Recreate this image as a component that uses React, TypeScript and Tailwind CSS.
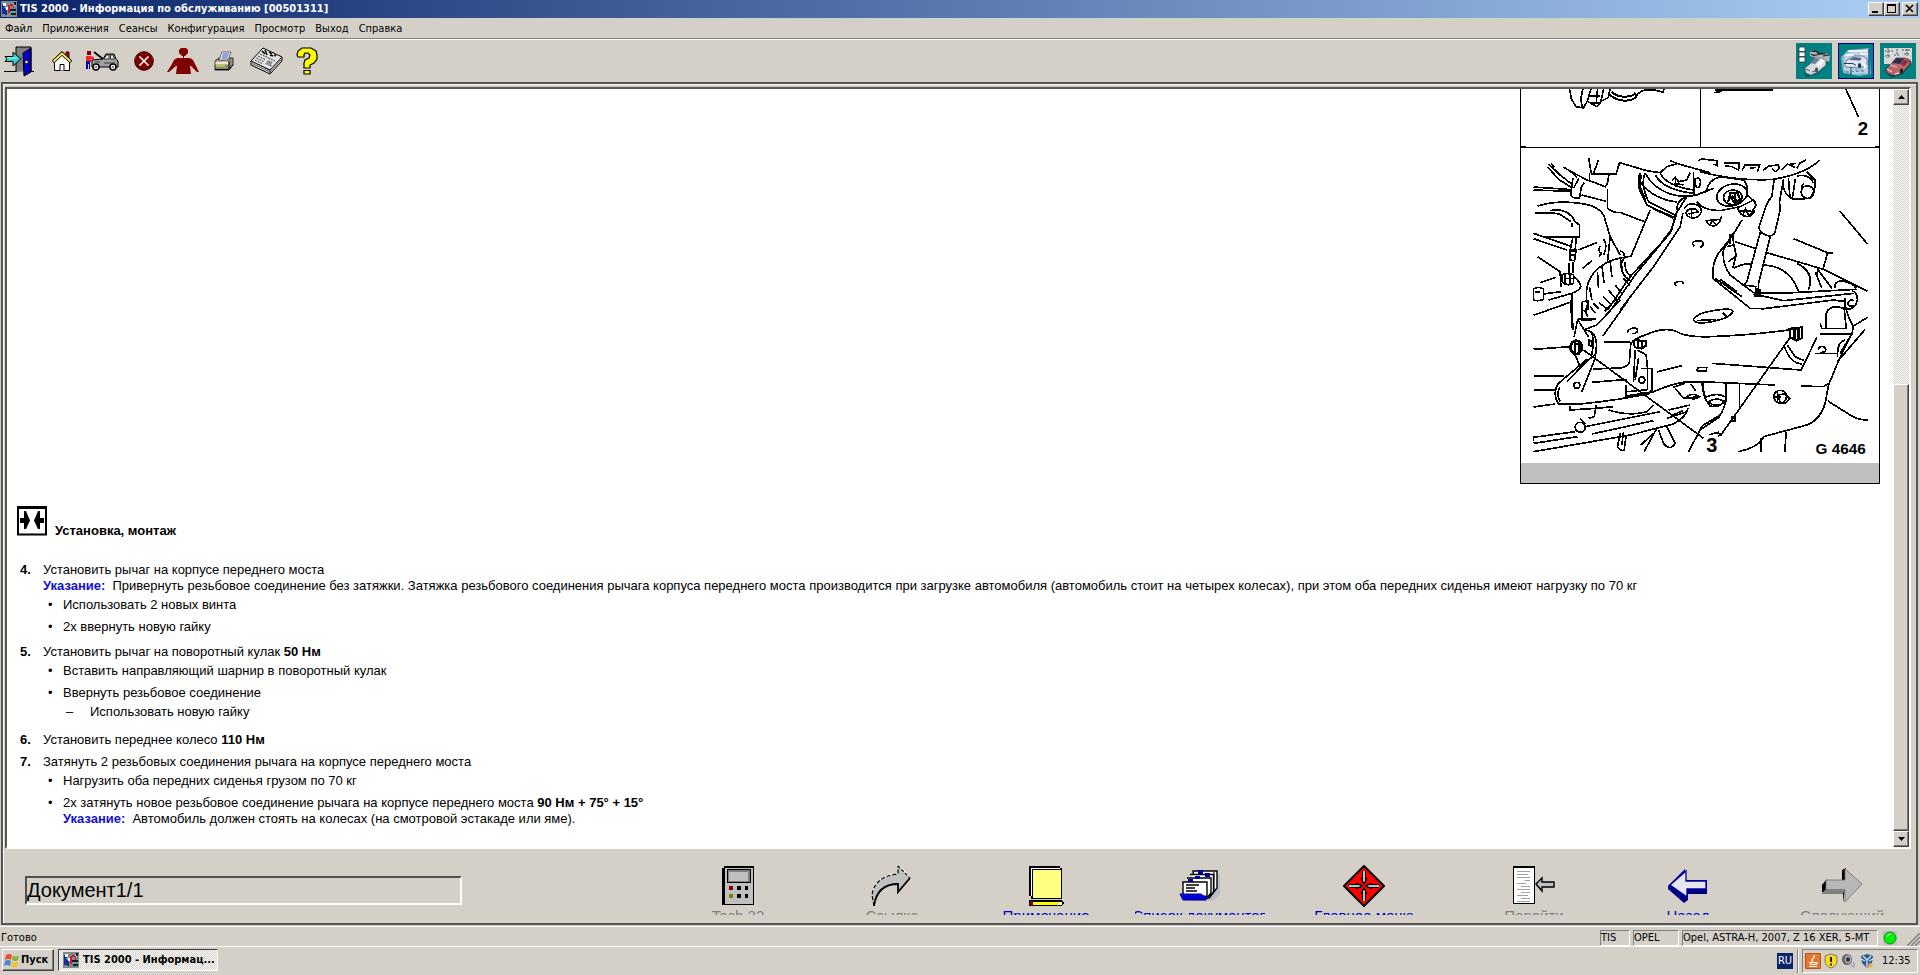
import type { ReactNode } from "react";
import clsx from "clsx";

const raised = "border border-t-white border-l-white border-r-[#404040] border-b-[#404040] shadow-[inset_-1px_-1px_0_#808080] bg-[#d4d0c8]";
const sunken = "border border-t-[#808080] border-l-[#808080] border-r-white border-b-white";

const menuItems = ["Файл", "Приложения", "Сеансы", "Конфигурация", "Просмотр", "Выход", "Справка"];

function AppIcon({ className }: { className?: string }) {
  return (
    <svg viewBox="0 0 16 16" className={className} shapeRendering="crispEdges" aria-hidden>
      <path fill="#7d8c8c" d="M0 0h16v16H0z" />
      <path fill="#1a2a9c" d="M1 3h3v10H1zM4 8h2v6H4z" />
      <path fill="#fff" d="M2 2h3v3H2zM5 6h2v3H5zM11 3h3v2h-3z" />
      <path fill="#d01828" d="M7 4h2v8H7zM9 3h3v2H9zM12 4h1v4h-1z" />
      <path fill="#101820" d="M9 8h6v2H9zM10 12h5v2h-5zM13 1h2v3h-2z" />
      <path fill="#40c0d0" d="M3 6h2v1H3zM10 10h3v1h-3z" />
    </svg>
  );
}

/* ---------- toolbar icons ---------- */

const DoorIcon = () => (
  <svg viewBox="0 0 32 32" className="size-8" aria-hidden>
    <path d="M0 26.500h12M27 26.500h3" stroke="#000" />
    <path d="M12 27V2h15v24" fill="#808080" stroke="#000" />
    <path d="M19 8l8-5v24l-7 4z" fill="#0000c8" stroke="#000" />
    <path d="M25.500 4v23" stroke="#000080" />
    <circle cx="22.500" cy="17" r="1.300" fill="#ff0" />
    <path d="M1 11.500h8V7l8 7-8 7v-4.500H1l2-2.500z" fill="#3cc" stroke="#000" />
    <path d="M3 13h10" stroke="#aff" />
  </svg>
);

const HouseIcon = () => (
  <svg viewBox="0 0 20 20" className="size-5" aria-hidden>
    <path d="M14 1h3v7h-3z" fill="#a01010" stroke="#400" />
    <path d="M2.500 10v9.500h15V10L10 3z" fill="#fff" stroke="#000" />
    <path d="M1 11l9-8.500L19 11" fill="none" stroke="#000" strokeWidth="3.500" />
    <path d="M1.500 10.500L10 2.500l8.500 8" fill="none" stroke="#f8ec60" strokeWidth="2" />
    <path d="M8 19.500v-6h4v6" fill="#fff" stroke="#000" />
  </svg>
);

const MechanicIcon = () => (
  <svg viewBox="0 0 34 20" className="h-5 w-[34px]" aria-hidden>
    <path d="M2 0h4v4H2z" fill="#800000" />
    <path d="M1 5h5l3 1v2H6v3H1z" fill="#f22" />
    <path d="M1 10h4v8H4v-5H3v5H1z" fill="#0000b0" />
    <path d="M7 9l11-1 3-5h8l2 5 2 2v6H7z" fill="#a0a0a0" stroke="#000" />
    <path d="M19 8l2.500-4H24v4zM25.500 4H28l1.500 4h-4z" fill="#e8e8e8" stroke="#000" strokeWidth=".7" />
    <path d="M9 1l9 7" stroke="#000" strokeWidth="1.600" />
    <path d="M19 12h11M10 11h5" stroke="#404040" />
    <circle cx="11" cy="16" r="3" fill="#fff" stroke="#000" strokeWidth="1.500" />
    <circle cx="28" cy="16" r="3" fill="#fff" stroke="#000" strokeWidth="1.500" />
    <path d="M10 16h2M27 16h2" stroke="#000" />
  </svg>
);

const CancelIcon = () => (
  <svg viewBox="0 0 20 20" className="size-5" aria-hidden>
    <circle cx="10" cy="10" r="9.300" fill="#800000" stroke="#300" />
    <path d="M5.500 5.500l9 9M14.500 5.500l-9 9" stroke="#fff" strokeWidth="1.600" />
  </svg>
);

const PersonIcon = () => (
  <svg viewBox="0 0 32 28" className="h-7 w-8" fill="#800000" aria-hidden>
    <path d="M14 1h5l2 2v3l-3 3h-3l-3-3V3z" />
    <path d="M16 8h1v3h5q4 0 6 6l4 8h-2l-6-6h-1l1 8H9l1-8H9l-7 6H0l5-8q2-6 6-6h5z" />
  </svg>
);

const PrinterIcon = () => (
  <svg viewBox="0 0 20 20" className="size-5" aria-hidden>
    <path d="M1 10l4-3h14v7l-4 5H1z" fill="#8c8c7c" stroke="#303030" />
    <path d="M5 9l3-8h9l-3 8z" fill="#fff" stroke="#606060" />
    <path d="M9 3h6M8 5h6M7.500 7h6" stroke="#2040c0" />
    <path d="M1.500 10.500h13v3h-13z" fill="#e8e8d0" />
    <path d="M2 15h9" stroke="#c8d020" strokeWidth="1.600" />
    <path d="M1 18.500h14l4-5M15 10v8" stroke="#000" fill="none" />
  </svg>
);

const NewsIcon = () => (
  <svg viewBox="0 0 33 28" className="h-7 w-[33px]" aria-hidden>
    <path d="M1 14L13 1l19 9v4L20 27 1 18z" fill="#e4e4e4" stroke="#000" />
    <path d="M1 14l19 9 12-13M20 23v4" fill="none" stroke="#000" />
    <path d="M12 4l3 3m0-4l2 5m2-3l3 2m-2 1l3 1m1-1l2 1" stroke="#000" strokeWidth="1.500" />
    <path d="M10 7l15 7M8 9l7 3.500M6.500 11l7 3.500M5 13l7 3.500M17 17l5 2M3 15l16 8" stroke="#303030" strokeDasharray="2 1" />
    <path d="M18 13l5 2-3 4-5-2z" fill="#909090" />
    <path d="M2 16.500l18 8.500L31 13" fill="none" stroke="#606060" />
  </svg>
);

const HelpIcon = () => (
  <svg viewBox="0 0 22 28" className="h-7 w-[22px]" fill="#ff0" stroke="#000" strokeWidth="1.200" aria-hidden>
    <path d="M1 8l1-4 4-3h9l5 3 1 4v4l-3 4-4 2v3H8v-5l1-3 4-2 1-3-2-2H9L8 8v2H2z" />
    <path d="M8 23.500h6V27H8z" />
  </svg>
);

const PartsIcon = () => (
  <svg viewBox="0 0 36 36" className="size-9" aria-hidden>
    <path fill="#008080" d="M0 0h36v36H0z" />
    <path fill="#005c5c" d="M8 30l12-4 11-9 2 2-11 12-12 3z" />
    <path fill="#fff" stroke="#333" strokeWidth=".8" d="M3 4h6v4.500H3zM3 9h6v4.500H3zM3 14h6v5H3z" />
    <path d="M14 7l6 1 4 3 6-1 4 3-1 6-10-3-9-3z" fill="#aeb5b5" />
    <path d="M14 8h6l3 3h7M17 12.500l6-1M27 13l6-1M15 11l4 2" stroke="#222" strokeWidth="1.200" />
    <path d="M9 25l5-4 5-6h7l4 3v4l-8 7-7 3-5-2z" fill="#d5dae2" stroke="#5f6a78" strokeWidth=".7" />
    <path d="M14 20l5-5 5 1-5 5z" fill="#6d7d90" />
    <path d="M25 16l4 2-5 6-4-2z" fill="#f6f8fb" />
    <ellipse cx="20.500" cy="27" rx="1.600" ry="2.500" fill="#404850" />
    <path d="M10 26l4 2M16 29l3-1" stroke="#556" />
  </svg>
);

const ServiceIcon = () => (
  <svg viewBox="0 0 36 36" className="size-9" aria-hidden>
    <path fill="#008080" stroke="#000070" strokeWidth="2" d="M0 0h36v36H0z" />
    <path fill="#7fb8c4" d="M3 14l7-7 21-2 2 26-12 2-16-3z" />
    <path fill="#b9d4e0" d="M6 13l8-5 16-2 1 24-16 1-9-4z" />
    <path d="M10 8h20M7 12h9M22 11h9" stroke="#eef" strokeWidth="2" />
    <path d="M6 21l3-4 7-4h9l4 3v6l-8 3-13-1z" fill="#dfe8f2" stroke="#4a5f86" strokeWidth=".8" />
    <path d="M11 17l5-3 8 1-2 2.500z" fill="#4f668c" />
    <ellipse cx="21.500" cy="22.500" rx="1.600" ry="2.600" fill="#203050" />
    <path d="M6 20.500h9l3 2M13 24v8" stroke="#203a70" fill="none" />
    <path d="M31 6v25" stroke="#1f50a8" strokeWidth="1.500" />
    <path d="M8 29l20-1M17 27h9" stroke="#5a86b0" strokeDasharray="3 2" />
    <path d="M24 20l5 2-2 4z" fill="#fff" />
  </svg>
);

const RedCarIcon = () => (
  <svg viewBox="0 0 36 36" className="size-9" aria-hidden>
    <path fill="#008080" d="M0 0h36v36H0z" />
    <path fill="#d5dbdb" d="M4 5h28v16H4z" />
    <path d="M5 8h9M17 6v6M22 7h8M8 5v10M14 12h6M27 6v7M5 13h5M24 11h6" stroke="#4a5252" strokeDasharray="2 1" />
    <path fill="#005c5c" d="M8 31l14-3 8-11 2 3-9 11-12 4z" />
    <path d="M6 26l5-5 5-6 9 0 5 2v4l-8 9-7 3-8-3z" fill="#b8646c" stroke="#5a1820" strokeWidth=".7" />
    <path d="M12 20l5-5 7 1-4 5z" fill="#2c2c4c" />
    <path d="M24 17l5 1-5 5-3-2z" fill="#7e2c3a" />
    <path d="M10 22l7 2" stroke="#e8a0a4" strokeWidth="1.500" />
    <path d="M7 26l5 3M15 31l4-1" stroke="#fff" />
    <ellipse cx="21.500" cy="28" rx="1.600" ry="2.600" fill="#1c1c20" />
  </svg>
);

/* ---------- navigation icons ---------- */

const TechIcon = () => (
  <svg viewBox="0 0 42 42" className="size-[42px]" shapeRendering="crispEdges" aria-hidden>
    <path fill="#000" d="M7 1h30v39H5V3h2z" />
    <path fill="#c0c0c0" d="M8 3h28v36H8z" />
    <path fill="#000" d="M10 4h24v14H10z" />
    <path fill="#808080" d="M11 5h22v12H11z" />
    <path fill="#c0c0c0" d="M12 7h19v9H12z" />
    <path fill="#800000" d="M12 21h4v4h-4z" />
    <path fill="#808000" d="M12 29h4v4h-4z" />
    <path fill="#000" d="M20 21h4v4h-4zM28 21h3v4h-3zM20 29h4v4h-4zM28 29h3v4h-3z" />
  </svg>
);

const CurvedArrowIcon = () => (
  <svg viewBox="0 0 42 42" className="size-[42px]" aria-hidden>
    <path d="M2 40L1 30Q4 11 27 9V1l12 12-12 14v-8Q6 19 3 40z" fill="#c0c0c0" />
    <path d="M1 29Q5 10 27 8M29 1l10 11" stroke="#fff" fill="none" />
    <path d="M3 41L1 30Q4 11 27 9V1" fill="none" stroke="#000" strokeWidth="1.200" strokeDasharray="4 2" />
    <path d="M27 1l12 12" fill="none" stroke="#000" strokeWidth="1.200" strokeDasharray="3 2" />
    <path d="M39 13L27 27v-8Q6 19 3 41" fill="none" stroke="#000" strokeWidth="1.800" />
  </svg>
);

const NoteIcon = () => (
  <svg viewBox="0 0 42 42" className="size-[42px]" shapeRendering="crispEdges" aria-hidden>
    <path fill="#000" d="M4 1h31v2h2v31H6v-3H4z" />
    <path fill="#fff" d="M6 3h29v1H7v27H6z" />
    <path fill="#ffff80" d="M8 5h28v28H8z" />
    <path fill="#000" d="M4 35h32l4 3-4 3H4z" />
    <path fill="#ff0" d="M8 37h26v3H8z" />
    <path fill="#800000" d="M5 36h3v4H5z" />
    <path fill="#fff" d="M34 37h3v3h-3z" />
  </svg>
);

const CardsIcon = () => (
  <svg viewBox="0 0 42 42" className="size-[42px]" aria-hidden>
    <path d="M38 8l3 2v20l-7 6H10l2-4h18z" fill="#b8bccb" />
    <path d="M14 6h24v17l-8 10H18z" fill="#fff" stroke="#000" strokeWidth="1.400" />
    <path d="M11 9.500h23.500V27L30 33M8 13h24v17M28 33l4-5" fill="#fff" stroke="#000" strokeWidth="1.400" />
    <path d="M35 7v20" stroke="#000" />
    <path d="M4 17h24v15H4z" fill="#fff" stroke="#000" strokeWidth="1.400" />
    <path d="M7 20h13M7 23h9M7 26h11" stroke="#000" strokeWidth="1.300" />
    <path d="M19 5h5v4h-5zM26 8h5v4h-5zM16 11h5v3h-5zM9 14h5v3H9z" fill="#0000a0" />
    <path d="M1 29h21l3 2h3l-1 4H4z" fill="#0000d8" stroke="#000080" />
  </svg>
);

const MainMenuIcon = () => (
  <svg viewBox="0 0 42 42" className="size-[42px]" aria-hidden>
    <path d="M21 1l20 20-20 20L1 21z" fill="#f00" stroke="#000" strokeWidth="2" strokeLinejoin="round" />
    <path d="M21 6v12M21 36V24M6 21h12M36 21H24" stroke="#000" strokeWidth="4" />
    <path d="M21 6v12M21 36V24M6 21h12M36 21H24" stroke="#fff" strokeWidth="1.500" />
    <path d="M18 13l3 6 3-6M18 29l3-6 3 6M13 18l6 3-6 3M29 18l-6 3 6 3" fill="none" stroke="#000" strokeWidth="1.200" />
  </svg>
);

const GotoIcon = () => (
  <svg viewBox="0 0 42 42" className="size-[42px]" shapeRendering="crispEdges" aria-hidden>
    <path fill="#000" d="M0 1h22v38H0z" />
    <path fill="#fff" d="M1 3h20v35H1z" />
    <path d="M4 6h13M4 9h11M4 12h13M12 15h5M4 18h9M8 21h9M4 24h13M8 27h9M4 30h11M8 33h9M4 36h13" stroke="#a0a0a0" />
    <path d="M23 19l6-6v4h12v5H29v4z" fill="#c0c0c0" stroke="#000" strokeWidth="1.400" shapeRendering="auto" />
  </svg>
);

const BackIcon = () => (
  <svg viewBox="0 0 42 42" className="size-[42px]" aria-hidden>
    <path d="M1 21L18 4v11h22v14H21v6l-4 3L1 24z" fill="#000080" />
    <path d="M3 20L19 6v10h20v8H20v8z" fill="#e4e6f0" stroke="#0000a0" strokeWidth="1.300" />
  </svg>
);

const NextIcon = () => (
  <svg viewBox="0 0 42 42" className="size-[42px]" aria-hidden>
    <path d="M1 20l4-5h16V5l4-2v12l-3 23V27H1z" fill="#000" />
    <path d="M5 15h19V4l17 15-17 18v-12H5z" fill="#b8b8b8" stroke="#707070" strokeWidth=".8" />
    <path d="M1 28l4-4h19l-2 5H1z" fill="#808080" />
  </svg>
);

type NavItem = { label: string; icon: ReactNode; disabled?: boolean };

const navGroups: { className?: string; items: NavItem[] }[] = [
  {
    items: [
      { label: "Tech 32", icon: <TechIcon />, disabled: true },
      { label: "Ссылка", icon: <CurvedArrowIcon />, disabled: true },
      { label: "Примечание", icon: <NoteIcon /> },
      { label: "Список документов", icon: <CardsIcon /> },
    ],
  },
  { className: "ml-[34px]", items: [{ label: "Главное меню", icon: <MainMenuIcon /> }] },
  {
    className: "ml-10",
    items: [
      { label: "Перейти", icon: <GotoIcon />, disabled: true },
      { label: "Назад", icon: <BackIcon /> },
      { label: "Следующий", icon: <NextIcon />, disabled: true },
    ],
  },
];

/* Front axle, underside view. Callouts 2 and 3 mark the bolts. */
function AxleFigure() {
  return (
    <svg
      viewBox="61 27 1077 1185"
      className="h-[395px] w-[360px]"
      fill="none"
      stroke="#000"
      strokeWidth="5"
      shapeRendering="crispEdges"
      role="img"
      aria-label="G 4646"
    >
      <path d="M61 1149h1077v62H61z" fill="#c0c0c0" stroke="none" />
      <path d="M62 27v1183h1075V27M62 202h1076M600 27v175" strokeWidth="3" />
      <path d="M62 200h16M1124 200h14" />
      <path d="M208 27l6 31 14 22 22 4 12-22 10-35M248 27l-6 30 4 26M262 64l28 16 12-14 8-39M268 48h32M270 68h26M306 62l18-9 6-26M292 27l-4 45" />
      <path d="M326 42q20 20 49 20t36-18M334 36q20 16 44 14t28-12" strokeWidth="6" />
      <path d="M406 46l24-16M430 30l34 0 24 6 4-9M642 38l18-3 10-6h148M645 30h20" />
      <path d="M1037 27l38 84" />

      {/* upper left: body, bellows, strut */}
      <g transform="translate(60 180)">
        <path d="M85 72l35 33 38 30M82 80l33 38 40 25M92 70l10 12M130 82l42 23 33 17M152 95l18 17M206 55l7 45M235 60l-15 40M213 101h75l10-33 82 24 40 6 20-18 35-10M208 100v22l47 18 7-10 4-26" />
        <path d="M262 148v57q18 15 38 12l75 29M40 141l115 8M40 150l115 4M158 115l-6 50q8 13 26 9l6-34 8-12M176 115l-16 30M184 165l74 19" />
        <path d="M52 198q58-18 128-8 60 8 72 40l18 60 30 55M270 290l-8 75M300 332q15 8 12 18M44 220l46-2 28 4 34 23M90 212l20-3q40 3 55 36l13 10v35h-16M40 280l110 38M40 296l100 34M75 292l87-2" />
        <path d="M155 248v14M158 292l-8 38v30l13 2 5-32h-18M168 292l-3 40M158 365v35M146 370v35M175 330l55-22M240 318q-8 17 4 22l-8 10M250 296q14 20 0 49M188 385l27-23M52 350l68 45 2 45M60 428l48-16" />
        <path d="M150 334h16M152 345h14" strokeWidth="6" />
        <path d="M125 405q15-10 35 0v25q-20 10-35-5zM130 415h28M135 400v32M150 402v30" />
        <path d="M40 447q15-9 30 0v31q-15 7-30 2zM45 455h15M70 462l52-7M85 480l70-20q25-10 27-20-2-15-22-30M40 526l115-41M155 460v50" />
        <path d="M360 100q-10 20-2 50l22 45 80 40M375 100q-15 30 10 85l80 40M378 104q22 38 62 54 38 16 80 8M362 128q38 50 108 58M405 105q25 45 115 55M420 100q20 38 100 50M450 62l25 10 95 26" />
        <path d="M362 104l-4 34 18 44M400 206l60 26" strokeWidth="7" />
        <path d="M390 210l-58 140M330 350q-20-5-28 25 3 35 28 45M315 365q-3 35 20 43M325 350q-85 10-115 65-15 25-10 75" />
        <path d="M300 352l8 48M270 365l5 45M245 375l7 55M232 395l3 50M208 440l7 40M310 415l20 22M285 435l20 25M265 450l25 30M248 470l27 25M236 488l24 18M185 485l18-2v27M185 485v30" />
        <path d="M500 170l-32 50-18 60-120 130-68 100M488 220l-8 40-80 120-100 130M420 315l-75 90-73 105M468 225l-14 45-24 28M470 210q0-30 30-40l30-5 40-15" />
        <path d="M492 208q6-18 26-16 26 2 26 22-6 20-28 20-18-4-18-16 4-12 18-12 16 0 18 12M505 222l26-6M514 206v24" />
        <path d="M455 122l10-10 10 13 25-5 10-22M462 130l28 5M466 114v26M520 95l2 70M526 118q4-6 12-2 6 10 0 24-8 6-12-4z" />
        <path d="M522 318q-12-10 3-14 20-4 25 4 0 10-10 14M468 438q-10-8 2-12 20-6 18 6" />
      </g>

      {/* upper right: ball joint, damper, arm */}
      <g transform="translate(600 180)">
        <path d="M0 95q110 30 220 23 100-18 138-58M-6 62l10-5 46 5 2 16-12-6M72 68l46 2-3 20-20-10-20-2M125 92l10-17h43l-6 20M150 85l18-3M188 92l17-14 30-3q5 15-10 20l-10-10M245 90l17-18 23 10M262 74l26-4M290 85l10-17 18-8" />
        <path d="M20 150q5-30 40-40l70 10q15 15 10 40M-10 186q20 26 70 26l60-12 40-20 8 15-18 30M0 160l40-15M140 165l28 23" />
        <ellipse cx="95" cy="165" rx="46" ry="32" transform="rotate(-15 95 165)" />
        <ellipse cx="98" cy="172" rx="28" ry="22" />
        <path d="M84 186l6-26 22 0 8 18-16 12-14-20M95 168l14 14M104 156v34" strokeWidth="6" />
        <path d="M112 202q8 28 30 28 20-4 20-20M118 214l36-2M128 226l8-20 10 20M18 240q4 16 22 18 20-3 24-30M18 242l42-4M30 254l6-12 12 12" />
        <path d="M222 118l-7 52q-15 15-23 45l-16 47q2 20 32 26 17-3 18-18l14-60-2-25 12-67M180 278l-40 147-10 10 40 5M210 290l-35 140v25" />
        <path d="M248 130q2 35 32 48l50-3q18-25 15-55l-25-25M265 115l4 55M285 118l-8 55M290 108q40-8 50 22" />
        <circle cx="322" cy="156" r="19" />
        <path d="M312 130q-12 10-6 22" />
        <path d="M418 212l84 100M280 296l102 42h16M382 338l-14 52M105 305l60 20M200 338l170 50 132 66M100 385q30-16 52-12M192 375q78 5 103 80M290 370q55 25 35 80M350 385l45 60M345 395l20 50M352 392l-2 18M405 445q-5-20 20-23 35 8 43 23" />
        <path d="M125 240l-30 50-40 50q-20 30-17 75l112 90h33M98 280l-28 50q-5 40 20 75l70 53 80 2 230-12M45 415l80 55M60 418l50 37M160 462l90 20 212-22M183 507l217-27 35 5" />
        <path d="M435 475v33q30 2 37-28 0-22-17-28M462 482q-15-6-19 8 2 12 19 6M98 280l2 30 8 35-10 40M80 320l20-5M85 365l20-15M90 282v30" />
        <path d="M168 445l12 5v18h-16z" fill="#000" />
      </g>

      <path d="M580 718q10-18 58-26 58-10 60 2-8 20-58 30-56 12-60-6zM590 722l56-4M668 698l12 12" />

      {/* lower left: mounting bolt, links */}
      <g transform="translate(60 660)">
        <path d="M40 46l115-41M325 0l-77 108M300 0l-70 75-40 15M290 -4l-36 38M185 5v55h30M192 30l12 20M200 14l-4 28M210 20l16 20M220 10l16 16M172 56h56" />
        <path d="M152 0l6 90" strokeWidth="7" />
        <path d="M172 60l-10 50M172 58l33 52M190 90q45 0 38 60l-3 25M215 95q7 35 0 70M206 120l10 4v14l-10-2z" />
        <ellipse cx="168" cy="142" rx="17" ry="20" strokeWidth="8" />
        <path d="M160 132h22M164 124v38M176 128v36" strokeWidth="6" />
        <path d="M40 148l110-8M165 165l13 30q12-5 47-30M200 178l-85 72q-20 30 0 62h65q120-12 210-32M205 178l-65 67M225 175l-40 100M118 262q-10 23 2 43" />
        <circle cx="170" cy="256" r="9" />
        <path d="M40 228h92M40 269h65M40 321l65-9M150 318v12l78-5 50-5M228 315l-6 35-17 5M250 126h80M220 207l80-3q30-4 28-24l4-50q13-15 43-25 65-30 105-5 30 12 90 10 140-5 270-25" />
        <path d="M340 122l12-4 10 6h14v14l-12 8-20-4zM352 120v24M366 124v22" strokeWidth="6" />
        <path d="M352 150l26 15 4 40h13v65l-20 16-57 2v-33M345 150l-5 95M355 175l-10 65M362 205h20v64l-60 6" />
        <circle cx="365" cy="240" r="9" />
        <path d="M215 247l85-7h20M410 216l75-19M190 150l360 265" />
        <path d="M318 288l82-13q60-25 90-28l80-2M458 262l37-12M465 265l25 30 50-5M512 252l14 20M500 290q20-14 38 0-16 14-38 0zM545 250l10 40M265 330q65 20 115 5l20-20M322 100q-2-12 18-16 15 0 12 11-7 8-17 5" />
        <path d="M530 212l5-10h25l-2 11z" />
        <path d="M40 412l125-17M195 380l225-45M40 430l132-20M215 402l185-40M40 455l290-50 130-33q40-22 43-47M440 355l60-20M445 330l65-15M455 346l34-14M180 355l15 17M40 412v12" />
        <circle cx="180" cy="382" r="15" />
        <path d="M300 400l-8 40q8 15 20 10l6-45M310 395l-5 40M410 385l-38 70M400 400l-38 35M415 390l15 40q20 25 35 0l-25-50M600 350l-60 40-35 65" />
      </g>

      {/* lower right: cross member */}
      <g transform="translate(600 660)">
        <path d="M378 88V40q7-20 32-20l22 5 6 60h-73l-5-15M360 102h95l5-22q-20-30-28-80M460 78l42-26M495 88l-83 97M455 100l-15 30-28 60-27 65-10 55q-15 50-55 65l-130 35q-10 30-75 45M182 415v40M258 395l-4 60M435 120q-25 5-23 50M420 160l30-50" />
        <path d="M268 86l38-4v32l-18 8-18-10z" strokeWidth="6" />
        <path d="M282 84v34M294 84v34" strokeWidth="8" />
        <path d="M270 112L60 408M252 138q18 52 53 54M262 135l23 35 27 12M350 112l-47 98-268-20M355 150q0-12 15-10 10 5 5 15l-15 3M343 160h67M0 245l225 10M302 258l68 2 15-10" />
        <circle cx="240" cy="290" r="19" />
        <path d="M236 284l18-2 14 14-12 14-18-4zM232 272v30M222 290h20" />
        <path d="M383 303l67 42q25 17 53 14M8 250q-3 40 22 68 30 7 45-18M16 292q34-17 62 0M24 306q26-18 50 0-24 20-50 0zM78 250v50q-8 30-18 45l-50 30-10 10M118 250v70M94 350h10v12h-10zM40 400h25l-12 10M28 404l28-8" />
      </g>

      <g fill="#000" stroke="none" fontFamily="Liberation Sans, sans-serif" fontWeight="bold">
        <text x="1073" y="164" fontSize="56">2</text>
        <text x="618" y="1117" fontSize="60">3</text>
        <text x="946" y="1121" fontSize="46">G 4646</text>
      </g>
    </svg>
  );
}

const Note = ({ children }: { children: ReactNode }) => (
  <p>
    <b className="mr-[7px] text-[#1010d0]">Указание:</b>
    {children}
  </p>
);

function Bullet({ children }: { children: ReactNode }) {
  return (
    <li className="flex">
      <span className="w-[15px] shrink-0">•</span>
      <div>{children}</div>
    </li>
  );
}

function Step({ n, children }: { n: number; children: ReactNode }) {
  return (
    <li className="flex">
      <b className="w-[23px] shrink-0">{n}.</b>
      <div>{children}</div>
    </li>
  );
}

const Bullets = ({ children }: { children: ReactNode }) => <ul className="flex flex-col gap-[6px] py-[3px] pl-[5px]">{children}</ul>;

function DocumentView() {
  return (
    <article className="min-w-0 flex-1 overflow-hidden bg-white pl-[10px] font-['Liberation_Sans',Arial,sans-serif] text-[13px] leading-4 text-black">
      <div className="flex justify-end pr-[13px]">
        <AxleFigure />
      </div>

      <h1 className="mt-[22px] flex items-end gap-2 font-bold">
        <svg viewBox="0 0 30 30" className="mb-[3px] size-[30px]" aria-hidden>
          <path d="M1 1.500h28v27H1z" fill="#fff" stroke="#000" strokeWidth="2" />
          <path d="M0 0h30v3H0zM3 12h4V5h2l4 9.500L9 23H7v-6H3zM27 12h-4V5h-2l-4 9.500 4 8.500h2v-6h4z" />
        </svg>
        Установка, монтаж
      </h1>

      <ol className="mt-[23px] flex flex-col gap-[6px] pl-[3px]">
        <Step n={4}>
          Установить рычаг на корпусе переднего моста
          <Note>
            Привернуть резьбовое соединение без затяжки. Затяжка резьбового соединения рычага корпуса переднего моста производится при загрузке автомобиля
            (автомобиль стоит на четырех колесах), при этом оба передних сиденья имеют нагрузку по 70 кг
          </Note>
          <Bullets>
            <Bullet>Использовать 2 новых винта</Bullet>
            <Bullet>2x ввернуть новую гайку</Bullet>
          </Bullets>
        </Step>
        <Step n={5}>
          Установить рычаг на поворотный кулак <b>50 Нм</b>
          <Bullets>
            <Bullet>Вставить направляющий шарнир в поворотный кулак</Bullet>
            <Bullet>
              Ввернуть резьбовое соединение
              <ul className="py-[3px] pl-[3px]">
                <li className="flex">
                  <span className="w-6">–</span>Использовать новую гайку
                </li>
              </ul>
            </Bullet>
          </Bullets>
        </Step>
        <Step n={6}>
          Установить переднее колесо <b>110 Нм</b>
        </Step>
        <Step n={7}>
          Затянуть 2 резьбовых соединения рычага на корпусе переднего моста
          <Bullets>
            <Bullet>Нагрузить оба передних сиденья грузом по 70 кг</Bullet>
            <Bullet>
              2x затянуть новое резьбовое соединение рычага на корпусе переднего моста <b>90 Нм + 75° + 15°</b>
              <Note>Автомобиль должен стоять на колесах (на смотровой эстакаде или яме).</Note>
            </Bullet>
          </Bullets>
        </Step>
      </ol>
    </article>
  );
}

function ScrollBar() {
  return (
    <div className="flex w-4 shrink-0 flex-col bg-[repeating-conic-gradient(#fff_0_25%,#d4d0c8_0_50%)] bg-[length:2px_2px]">
      <button type="button" aria-label="Вверх" className={clsx(raised, "flex h-4 items-center justify-center")}>
        <svg viewBox="0 0 7 4" className="h-1 w-[7px]" aria-hidden>
          <path d="M0 4l3.500-4L7 4z" />
        </svg>
      </button>
      <div className="basis-[279px]" />
      <div className={clsx(raised, "flex-1")} />
      <button type="button" aria-label="Вниз" className={clsx(raised, "flex h-4 items-center justify-center")}>
        <svg viewBox="0 0 7 4" className="h-1 w-[7px]" aria-hidden>
          <path d="M0 0h7L3.500 4z" />
        </svg>
      </button>
    </div>
  );
}

function BottomPanel() {
  return (
    <div className="flex h-[74px] shrink-0 items-start pl-[22px] pr-[9px]">
      <div className="mt-[27px] h-[29px] w-[437px] border-2 border-t-[#505050] border-l-[#505050] border-r-white border-b-white font-['Liberation_Sans',Arial,sans-serif] text-xl leading-6">
        Документ1/1
      </div>
      <nav className="ml-auto flex pt-4">
        {navGroups.map((group, i) => (
          <div key={i} className={clsx("flex gap-6", group.className)}>
            {group.items.map((item) => (
              <button
                key={item.label}
                type="button"
                disabled={item.disabled}
                className={clsx("flex w-[130px] flex-col items-center overflow-hidden", item.disabled ? "text-[#808080]" : "text-[#0000c8]")}
              >
                {item.icon}
                <span className="flex h-2 w-full justify-center overflow-hidden whitespace-nowrap font-['Liberation_Sans',Arial,sans-serif] text-[15px] leading-[17px]">
                  {item.label}
                </span>
              </button>
            ))}
          </div>
        ))}
      </nav>
    </div>
  );
}

function StatusBar() {
  return (
    <footer className="flex h-[22px] shrink-0 items-center border-b border-white shadow-[inset_0_1px_0_#d4d0c8,inset_0_2px_0_#fff]">
      <span className="flex-1 pl-px pt-1">Готово</span>
      <div className="mt-1 flex gap-[3px] leading-[14px]">
        <span className={clsx(sunken, "w-[30px]")}>TIS</span>
        <span className={clsx(sunken, "w-[46px]")}>OPEL</span>
        <span className={clsx(sunken, "w-[196px] whitespace-nowrap")}>Opel, ASTRA-H, 2007, Z 16 XER, 5-MT</span>
      </div>
      <svg viewBox="0 0 14 14" className="ml-[5px] mt-1 size-[14px]" aria-hidden>
        <path d="M0 0h14v14H0z" fill="#c0c0c0" />
        <circle cx="7" cy="7" r="6" fill="#00f000" stroke="#109010" />
        <path d="M4 6q1-3 4-3" stroke="#fff" fill="none" />
      </svg>
      <svg viewBox="0 0 13 13" className="ml-[10px] mt-2 size-[13px]" stroke="#808080" strokeWidth="1.500" aria-hidden>
        <path d="M0 13L13 0M4 13l9-9M8 13l5-5" />
      </svg>
    </footer>
  );
}

function TaskBar() {
  return (
    <div className="flex h-7 shrink-0 items-start pl-[2px] pr-[2px] pt-[2px]">
      <button type="button" className={clsx(raised, "flex h-[22px] w-[52px] items-center gap-px pl-px font-bold")}>
        <svg viewBox="0 0 16 16" className="size-4 shrink-0" aria-hidden>
          <path d="M2 3q3-2 6 0L7 8Q4 6 1 8z" fill="#e8502c" />
          <path d="M9 3.500q3 2 6 0L14 8q-3 2-6 0z" fill="#7ab83a" />
          <path d="M1 9q3-2 6 0l-1 5q-3-2-6 0z" fill="#4a86d8" />
          <path d="M8 9.500q3 2 6 0l-1 5q-3 2-6 0z" fill="#f4c030" />
        </svg>
        Пуск
      </button>
      <button
        type="button"
        className="ml-1 flex h-[22px] w-[160px] items-center gap-1 whitespace-nowrap border border-t-[#404040] border-l-[#404040] border-r-white border-b-white bg-[repeating-conic-gradient(#fff_0_25%,#d4d0c8_0_50%)] bg-[length:2px_2px] pl-1 font-bold"
      >
        <AppIcon className="size-4 shrink-0" />
        TIS 2000 - Информац...
      </button>
      <div className="ml-auto flex items-center">
        <span className="mr-1 flex size-4 items-center justify-center bg-[#0a246a] text-white">RU</span>
        <span className="mr-[3px] h-6 w-[2px] border-l border-l-[#808080] border-r border-r-white" />
        <div className={clsx(sunken, "flex h-6 w-[116px] items-center gap-[2px] pl-[2px]")}>
          <svg viewBox="0 0 16 16" className="size-4" aria-hidden>
            <rect width="16" height="16" rx="1" fill="#b85410" />
            <path d="M1 1h14v14H1z" fill="#e8762c" />
            <path d="M9 2q1 2-1 3.500t0 3.500M5 9.500h6v2H6zM4 13.500h8M11 9.500q2 0 0 2" stroke="#fff" fill="none" strokeWidth="1.200" />
          </svg>
          <svg viewBox="0 0 16 16" className="size-4" aria-hidden>
            <path d="M8 1l6 2v5q0 5-6 7-6-2-6-7V3z" fill="#f8dc20" stroke="#807860" />
            <path d="M8 4v5M8 10.500v2" stroke="#202020" strokeWidth="2" />
          </svg>
          <svg viewBox="0 0 16 16" className="size-4" aria-hidden>
            <ellipse cx="6" cy="6.500" rx="5" ry="5.500" fill="#606468" />
            <ellipse cx="7" cy="6.500" rx="3.200" ry="4" fill="#b4b8bc" />
            <ellipse cx="7" cy="6.500" rx="2" ry="2.500" fill="#303438" />
            <path d="M10 11q2 1 0 3M12 9q3 3 0 6" stroke="#8888d8" fill="none" />
          </svg>
          <svg viewBox="0 0 16 16" className="size-4" aria-hidden>
            <path d="M2 3l6-2 6 2-1 7-5 5-5-5z" fill="#2c5c94" />
            <path d="M4 3l4 4 4-4M8 7v7M2 6l4 2M14 6l-4 2" stroke="#d8e8f4" fill="none" strokeWidth="1.300" />
            <path d="M11.500 9l1 2h2l-1.500 2 .5 2-2-1-2 1 .5-2L8.500 11h2z" fill="#f0b030" />
          </svg>
          <time className="ml-[5px]">12:35</time>
        </div>
      </div>
    </div>
  );
}

const windowButton = clsx(raised, "flex h-[14px] w-4 items-center justify-center");

export default function App() {
  return (
    <div className="flex h-screen min-h-[640px] flex-col overflow-hidden bg-[#d4d0c8] font-['DejaVu_Sans_Condensed','Noto_Sans',sans-serif] text-[11px] leading-[14px] text-black">
      <header className="flex h-[18px] shrink-0 items-center bg-[linear-gradient(90deg,#0a246a,#a6caf0_97%)] pr-[2px]">
        <AppIcon className="h-4 w-[18px]" />
        <span className="flex-1 pl-[2px] font-bold text-white">TIS 2000 - Информация по обслуживанию [00501311]</span>
        <button type="button" aria-label="Свернуть" className={windowButton}>
          <svg viewBox="0 0 10 10" className="size-[10px]" aria-hidden>
            <path d="M1 7h6v2H1z" />
          </svg>
        </button>
        <button type="button" aria-label="Восстановить" className={windowButton}>
          <svg viewBox="0 0 10 10" className="size-[10px]" shapeRendering="crispEdges" aria-hidden>
            <path d="M0 0h9v9H0zM1 2v6h7V2z" fillRule="evenodd" />
          </svg>
        </button>
        <button type="button" aria-label="Закрыть" className={clsx(windowButton, "ml-[2px]")}>
          <svg viewBox="0 0 10 10" className="size-[10px]" stroke="#000" strokeWidth="1.600" aria-hidden>
            <path d="M1 1l7 7M8 1L1 8" />
          </svg>
        </button>
      </header>

      <nav className="flex h-[22px] shrink-0 items-center gap-[10px] border-b border-white pl-[5px] shadow-[inset_0_-1px_0_#808080]">
        {menuItems.map((item) => (
          <button key={item} type="button">
            {item}
          </button>
        ))}
      </nav>

      <div className="flex h-[42px] shrink-0 items-center pl-1 pr-1">
        <button type="button" aria-label="Выход"><DoorIcon /></button>
        <button type="button" aria-label="Домой" className="ml-4"><HouseIcon /></button>
        <button type="button" aria-label="Автомобиль" className="ml-[13px]"><MechanicIcon /></button>
        <button type="button" aria-label="Отмена" className="ml-[15px]"><CancelIcon /></button>
        <button type="button" aria-label="Клиент" className="ml-[13px]"><PersonIcon /></button>
        <button type="button" aria-label="Печать" className="ml-[15px]"><PrinterIcon /></button>
        <button type="button" aria-label="Новости" className="ml-4"><NewsIcon /></button>
        <button type="button" aria-label="Справка" className="ml-[13px]"><HelpIcon /></button>
        <div className="ml-auto flex gap-[6px]">
          <button type="button" aria-label="Запчасти"><PartsIcon /></button>
          <button type="button" aria-label="Сервис"><ServiceIcon /></button>
          <button type="button" aria-label="Модели"><RedCarIcon /></button>
        </div>
      </div>

      <main className="ml-px mr-[2px] flex min-h-0 flex-1 flex-col border-2 border-[#585654] shadow-[inset_1px_1px_0_#fff]">
        <div className="ml-[2px] mr-[5px] mt-[3px] flex min-h-0 flex-1 border-2 border-t-[#585654] border-l-[#585654] border-r-white border-b-white">
          <DocumentView />
          <ScrollBar />
        </div>
        <BottomPanel />
      </main>

      <StatusBar />
      <TaskBar />
    </div>
  );
}
